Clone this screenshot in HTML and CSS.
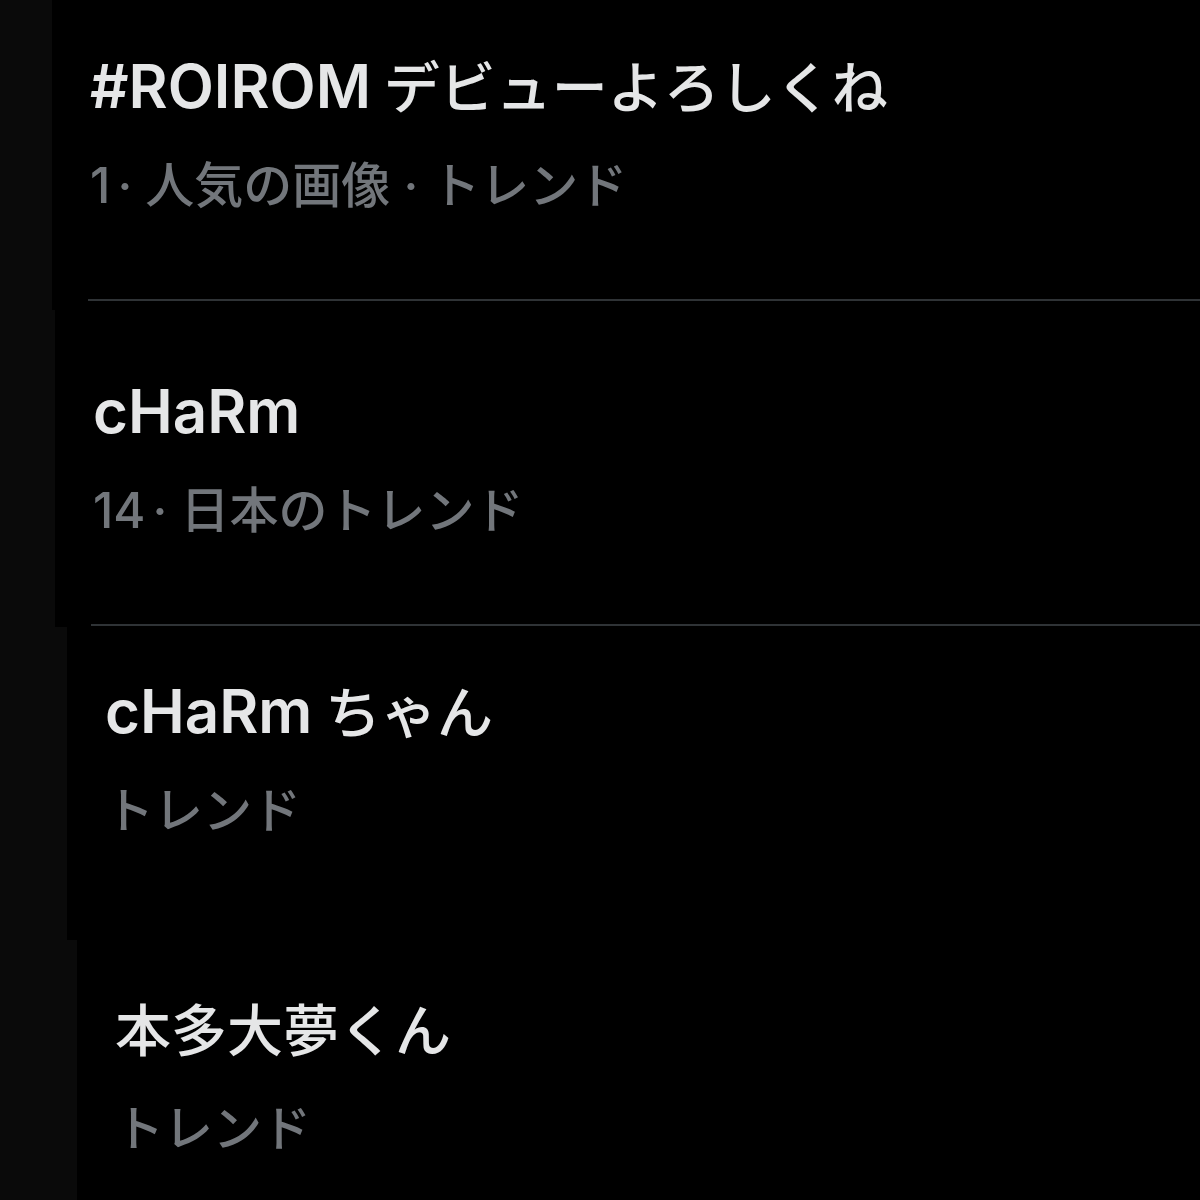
FILE: index.html
```html
<!DOCTYPE html>
<html lang="ja">
<head>
    <meta charset="UTF-8">
    <meta name="viewport" content="width=device-width, initial-scale=1.0">
    <title>トレンド</title>
    <link rel="stylesheet" href="styles.css">
</head>
<body>
    <section class="trend-list">
        <div class="trend trend-one">
            <div class="trend-title">#ROIROM<span class="ja"> デビューよろしくね</span></div>
            <div class="trend-meta">1<span class="tight"> ·</span> 人気の画像 · トレンド</div>
            <div class="trend-line"></div>
        </div>
        <div class="trend trend-two">
            <div class="trend-title">cHaRm</div>
            <div class="trend-meta">14<span class="tight"> ·</span> 日本のトレンド</div>
            <div class="trend-line"></div>
        </div>
        <div class="trend trend-three">
            <div class="trend-title">cHaRm<span class="ja"> ちゃん</span></div>
            <div class="trend-meta">トレンド</div>
        </div>
        <div class="trend trend-four">
            <div class="trend-title"><span class="ja">本多大夢くん</span></div>
            <div class="trend-meta">トレンド</div>
        </div>
    </section>
</body>
</html>
```

FILE: styles.css
```css
/* trend list css */

html,
body {
    margin: 0;
    padding: 0;
    height: 100%;
    background: #0a0a0a;
}

.trend-list {
    display: flex;
    flex-direction: column;
    height: 1200px;
    overflow: hidden;
    font-family: Inter, "Noto Sans CJK JP", sans-serif;
}

.trend {
    box-sizing: border-box;
    display: flex;
    flex-direction: column;
    background: #000;
    padding-left: 38px;
}

.trend-one {
    height: 310px;
    margin-left: 52px;
    padding-top: 51px;
}

.trend-two {
    height: 317px;
    margin-left: 55px;
    padding-top: 66px;
}

.trend-three {
    height: 313px;
    margin-left: 67px;
    padding-top: 49px;
}

.trend-four {
    flex: 1;
    margin-left: 77px;
    padding-top: 54px;
}

.trend-title {
    font-size: 60px;
    line-height: 70px;
    font-weight: 600;
    color: #e5e6e7;
    white-space: nowrap;
}

.trend-title .ja {
    font-family: "Noto Sans CJK JP", sans-serif;
    font-size: 56px;
    font-weight: 500;
    line-height: 1;
}

.trend-meta {
    margin-top: 35px;
    font-size: 49px;
    line-height: 60px;
    font-weight: 500;
    color: #72767b;
    white-space: nowrap;
}

.trend-meta .tight {
    word-spacing: -6px;
}

.trend-line {
    margin-top: 83px;
    margin-left: -2px;
    height: 2px;
    background: #2f3336;
}
```
